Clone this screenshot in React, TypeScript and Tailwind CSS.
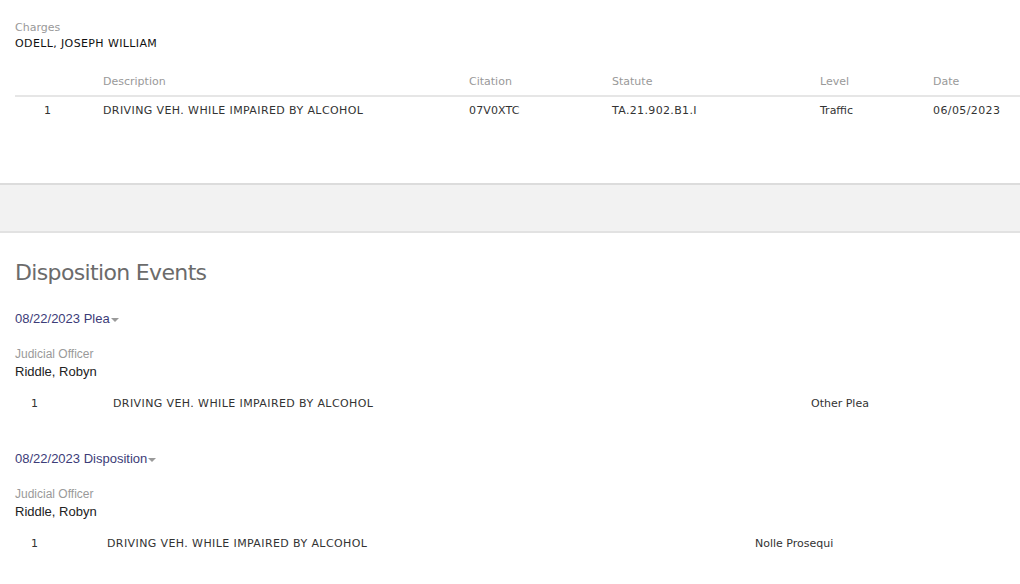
import React from "react";

const verdana = { fontFamily: '"DejaVu Sans", Verdana, sans-serif' };
const arial = { fontFamily: '"Liberation Sans", Arial, sans-serif' };

function Caret() {
  return (
    <svg width="8" height="5" viewBox="0 0 8 5" className="ml-[1px] mt-[2px]">
      <path d="M0 0 L8 0 L4 4 Z" fill="#9a9a9a" />
    </svg>
  );
}

function Event({
  title,
  numPad,
  descLeft,
  resultLeft,
  result,
}: {
  title: string;
  numPad: string;
  descLeft: number;
  resultLeft: number;
  result: string;
}) {
  return (
    <div className="px-[15px]">
      <div className="flex items-center text-[13px] text-[#3c3c78] h-[20px]" style={arial}>
        <span>{title}</span>
        <Caret />
      </div>
      <div className="mt-[18px] text-[12px] text-[#9a9a9a] leading-[14px]" style={arial}>
        Judicial Officer
      </div>
      <div className="mt-[2px] text-[13px] text-[#222] leading-[18px]" style={arial}>
        Riddle, Robyn
      </div>
      <div className="mt-[16px] flex text-[11px] text-[#333] leading-[14px]" style={verdana}>
        <span className={numPad}>1</span>
        <span style={{ width: resultLeft - descLeft }} className="shrink-0 tracking-[0.4px]">
          DRIVING VEH. WHILE IMPAIRED BY ALCOHOL
        </span>
        <span>{result}</span>
      </div>
    </div>
  );
}

export default function App() {
  return (
    <div className="w-[1020px] h-[584px] bg-white overflow-hidden relative">
      <div className="pl-[15px] pt-[21px]">
        <div className="text-[11px] text-[#999] leading-[13px]" style={verdana}>
          Charges
        </div>
        <div className="mt-[3px] text-[11px] text-[#111] leading-[13px] tracking-[0.38px]" style={verdana}>
          ODELL, JOSEPH WILLIAM
        </div>
        <div className="mt-[25px] text-[11px] leading-[14px]" style={verdana}>
          <div className="flex text-[#999] pb-[6px] border-b-2 border-[#e6e6e6]">
            <div className="w-[88px] shrink-0" />
            <div className="w-[366px] shrink-0">Description</div>
            <div className="w-[143px] shrink-0">Citation</div>
            <div className="w-[208px] shrink-0">Statute</div>
            <div className="w-[113px] shrink-0">Level</div>
            <div>Date</div>
          </div>
          <div className="flex text-[#333] pt-[7px]">
            <div className="w-[88px] shrink-0 pl-[29px]">1</div>
            <div className="w-[366px] shrink-0 tracking-[0.4px]">DRIVING VEH. WHILE IMPAIRED BY ALCOHOL</div>
            <div className="w-[143px] shrink-0 tracking-[0.15px]">07V0XTC</div>
            <div className="w-[208px] shrink-0 tracking-[0.35px]">TA.21.902.B1.I</div>
            <div className="w-[113px] shrink-0">Traffic</div>
            <div className="tracking-[0.4px]">06/05/2023</div>
          </div>
        </div>
      </div>

      <div className="mt-[65px] h-[50px] bg-[#f2f2f2] border-t-2 border-b-2 border-t-[#dcdcdc] border-b-[#e2e2e2]" />

      <div className="px-[15px] mt-[26px]">
        <div className="text-[22px] text-[#6b6b6b] leading-[28px] tracking-[-0.65px]" style={verdana}>
          Disposition Events
        </div>
      </div>

      <div className="mt-[22px]">
        <Event title="08/22/2023 Plea" numPad="w-[98px] shrink-0 pl-[16px]" descLeft={113} resultLeft={811} result="Other Plea" />
      </div>
      <div className="mt-[38px]">
        <Event title="08/22/2023 Disposition" numPad="w-[92px] shrink-0 pl-[16px]" descLeft={107} resultLeft={755} result="Nolle Prosequi" />
      </div>
    </div>
  );
}
